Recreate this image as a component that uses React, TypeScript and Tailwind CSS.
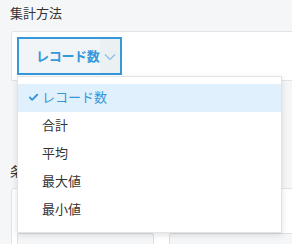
import { Check, ChevronDown } from "lucide-react";

const options = ["レコード数", "合計", "平均", "最大値", "最小値"];

export default function App() {
  const selected = "レコード数";
  return (
    <div
      className="relative h-[244px] w-[292px] overflow-hidden bg-[#f5f6f7] text-[13px] text-[#333]"
      style={{ fontFamily: '"Noto Sans CJK JP", "Noto Sans", sans-serif' }}
    >
      <div className="pl-[10px] pt-[4px] leading-[18px]">集計方法</div>
      <div className="ml-[11px] mt-[9px] h-[50px] w-[300px] rounded-tl-[3px] border border-[#e1e3e4] bg-white pl-[5px] pt-[5px]">
        <button className="flex h-[38px] w-[105px] items-stretch border-2 border-[#3498db] bg-[#f2f5f7]">
          <span className="flex flex-1 items-center pb-[1px] pl-[17px] font-bold tracking-[-0.3px] text-[#3498db]">
            レコード数
          </span>
          <span className="flex w-[20px] items-center justify-center bg-[#ebf0f3]">
            <svg width="12" height="8" viewBox="0 0 12 8" className="mt-[2px]">
              <path d="M1 1.5 L6 6.5 L11 1.5" fill="none" stroke="#8dbde3" strokeWidth="1.2" />
            </svg>
          </span>
        </button>
      </div>

      <div className="mt-[81px] pl-[10px] leading-[18px]">条件</div>
      <div className="ml-[11px] mt-[8px] h-[80px] w-[300px] rounded-tl-[3px] border border-[#e1e3e4] bg-white px-[5px] pt-[44px]">
        <div className="flex gap-[15px]">
          <div className="h-[30px] w-[146px] rounded-[2px] border border-[#dcdfe0] bg-[#f4f6f7]" />
          <div className="h-[30px] w-[146px] rounded-[2px] border border-[#dcdfe0] bg-[#f4f6f7]" />
        </div>
      </div>

      <ul className="absolute left-[17px] top-[76px] w-[265px] border border-[#e3e3e3] bg-white pb-[8px] pt-[7px] shadow-[0_2px_6px_rgba(0,0,0,0.12)]">
        {options.map((o) => {
          const active = o === selected;
          return (
            <li
              key={o}
              className={`flex h-[28px] items-center pb-[3px] ${active ? "bg-[#e1f0fd] text-[#3498db]" : ""}`}
            >
              <span className="flex w-[24px] justify-end pr-[3px] pt-[2px]">
                {active && <Check className="h-[11px] w-[11px] text-[#3498db]" strokeWidth={4} />}
              </span>
              <span>{o}</span>
            </li>
          );
        })}
      </ul>
    </div>
  );
}
